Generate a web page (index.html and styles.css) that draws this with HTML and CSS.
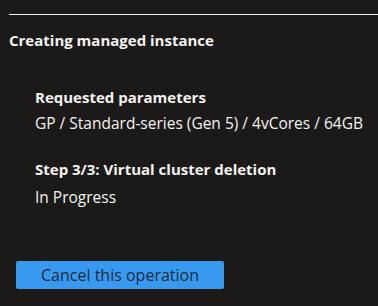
FILE: index.html
```html
<!DOCTYPE html>
<html lang="en">
<head>
    <meta charset="UTF-8">
    <meta name="viewport" content="width=device-width, initial-scale=1.0">
    <title>Creating managed instance</title>
    <link rel="stylesheet" href="styles.css">
</head>
<body>
    <div class="panel">
        <hr class="divider">
        <h2>Creating managed instance</h2>
        <div class="details">
            <div class="label">Requested parameters</div>
            <div class="value">GP / Standard-series (Gen 5) / 4vCores / 64GB</div>
            <div class="label step">Step 3/3: Virtual cluster deletion</div>
            <div class="value status">In Progress</div>
        </div>
        <button class="cancel">Cancel this operation</button>
    </div>
</body>
</html>
```

FILE: styles.css
```css
body {
    margin: 0;
    background-color: #1b1a19;
    color: #f3f2f1;
    font-family: "Open Sans", "Noto Sans", sans-serif;
    font-size: 15.5px;
}
.panel {
    padding: 14px 0 0 9px;
    height: 306px;
    box-sizing: border-box;
}
.divider {
    border: none;
    border-top: 1px solid #f3f2f1;
    margin: 0;
}
h2 {
    font-size: 15px;
    font-weight: 700;
    margin: 15px 0 0 0;
    line-height: 20px;
}
.details {
    padding: 37px 0 0 26px;
}
.label {
    font-size: 15px;
    font-weight: 700;
    line-height: 20px;
}
.value {
    margin-top: 6px;
    line-height: 20px;
}
.step {
    margin-top: 26px;
}
.status {
    margin-top: 8px;
}
.cancel {
    display: block;
    margin: 54px 0 0 7px;
    width: 208px;
    height: 28px;
    background-color: #3899f0;
    color: #1b2a3a;
    border: none;
    border-radius: 2px;
    font-family: inherit;
    font-size: 16px;
    padding: 0;
}
```
